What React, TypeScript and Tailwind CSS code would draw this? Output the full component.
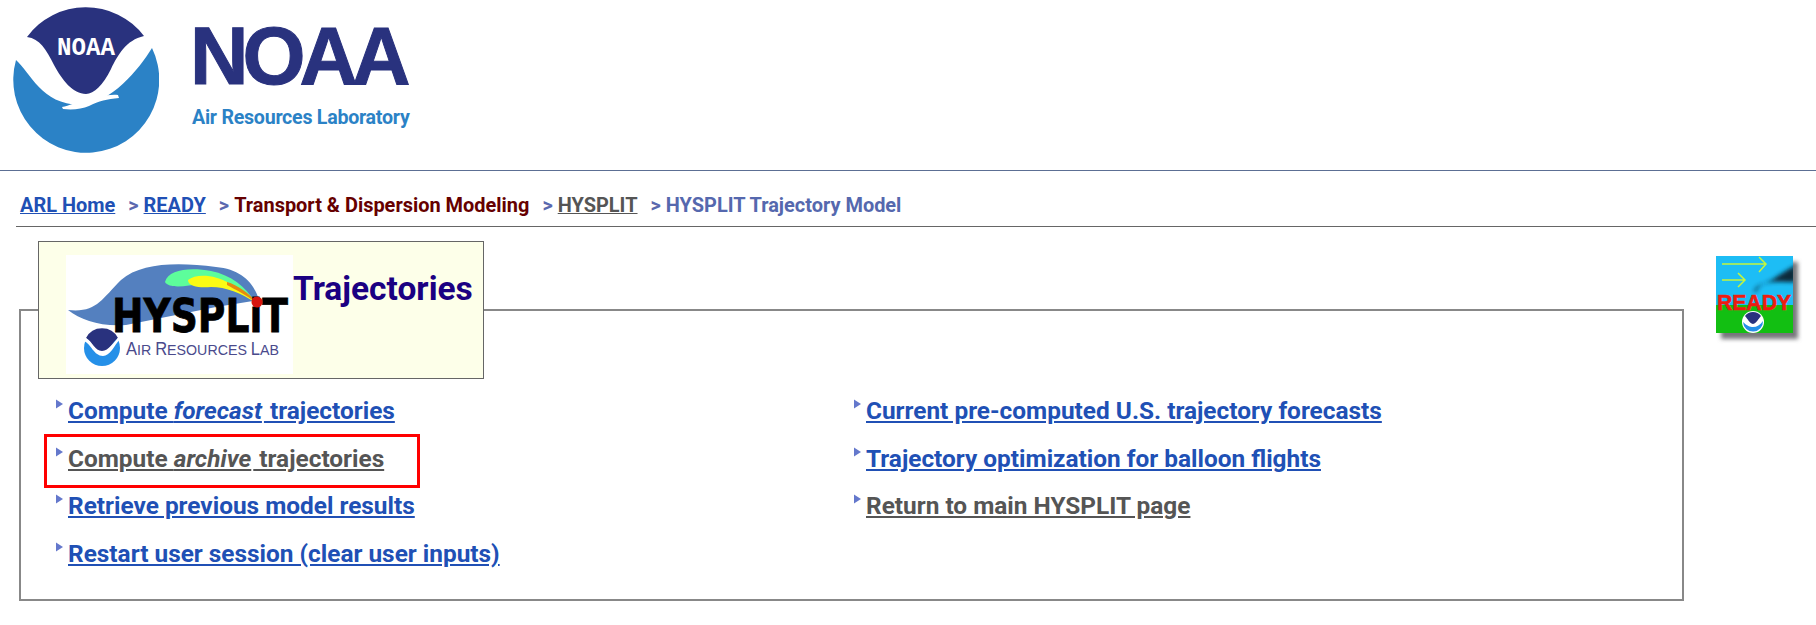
const NoaaMark = () => (
  <svg viewBox="0 0 146 146" className="w-[146px] h-[146px]">
    <path d="M3 53 C18 66 28 97 67 98 C98 97 126 62 139 41 A73 73 0 1 1 3 53 Z" fill="#2b82c6" />
    <path d="M14 30 A73 73 0 0 1 131 29 C113 33 105 48 98 62 C90 78 81 87 73 87 C60 87 49 73 41 58 C33 42 27 32 14 30 Z" fill="#29327e" />
    <path d="M64 90 C78 92 92 87 105 88 L106 91 C94 92 86 94 76 99 C69 102 60 103 50 102 L49 100 C56 99 64 95 68 93 Z" fill="#ffffff" />
    <text x="44" y="48" fill="#ffffff" fontFamily="'Liberation Mono', monospace" fontWeight="700" fontSize="26" textLength="58" lengthAdjust="spacingAndGlyphs">NOAA</text>
  </svg>
);

const HysplitLogo = () => (
  <svg viewBox="0 0 227 119" className="w-[227px] h-[119px] bg-white shrink-0 overflow-visible">
    <path d="M2 55 C30 58 35 45 55 25 C75 8 110 7 150 12 C175 14 188 28 193 45 L150 52 L60 70 C35 72 15 65 2 55 Z" fill="#5480bf" />
    <path d="M99 27 C102 14 125 12 145 16 C165 20 180 32 188 46 C170 32 150 27 135 29 C120 31 103 34 99 27 Z" fill="#5dfd9b" />
    <path d="M122 25 C130 18 150 20 163 28 C175 35 183 42 190 48 C175 38 160 32 145 32 C135 33 122 32 122 25 Z" fill="#fbfb14" />
    <path d="M161 27 C172 30 185 40 191 48 C180 40 170 35 161 30 Z" fill="#e68a10" />
    <text x="46" y="77" fill="#000000" stroke="#000000" strokeWidth="0.8" fontFamily="'DejaVu Sans', sans-serif" fontWeight="700" fontSize="47" textLength="176" lengthAdjust="spacingAndGlyphs">HYSPLiT</text>
    <circle cx="191" cy="47" r="5.5" fill="#d8140e" />
    <circle cx="36" cy="93" r="18" fill="#2590e8" />
    <path d="M20 83 A18 18 0 0 1 52 83 C46 87 43 97 36 99 C29 97 26 87 20 83 Z" fill="#29327e" />
    <path d="M18 86 C25 89 28 101 37 101 C44 101 48 91 54 84 L54 81 C47 87 43 96 36 96 C29 96 26 86 20 83 Z" fill="#ffffff" />
    <text x="60" y="100" fill="#4a4a8c" fontFamily="'Liberation Sans', sans-serif" fontWeight="400" fontSize="15.5" textLength="153" lengthAdjust="spacingAndGlyphs">
      <tspan fontSize="18">A</tspan>IR <tspan fontSize="18">R</tspan>ESOURCES <tspan fontSize="18">L</tspan>AB
    </text>
  </svg>
);

const ReadyIcon = () => (
  <svg viewBox="0 0 88 88" className="w-[88px] h-[88px] shrink-0 overflow-visible">
    <defs>
      <filter id="soft" x="-20%" y="-20%" width="140%" height="140%">
        <feGaussianBlur stdDeviation="2" />
      </filter>
      <filter id="soft2" x="-30%" y="-50%" width="160%" height="200%">
        <feGaussianBlur stdDeviation="2.2" />
      </filter>
      <clipPath id="tile">
        <rect width="77" height="77" />
      </clipPath>
    </defs>
    <rect x="5" y="6" width="77" height="77" fill="#77777c" filter="url(#soft)" />
    <rect x="0" y="0" width="77" height="49" fill="#1dbdf5" />
    <rect x="0" y="49" width="77" height="28" fill="#12bf12" />
    <path d="M6 8 H50 M43 1 L50 8 L43 16 M6 24 H29 M22 17 L29 24 L22 31" fill="none" stroke="#c4f53c" strokeWidth="1.5" />
    <g clipPath="url(#tile)">
      <path d="M38 36 C40 28 48 28 56 24 C62 20 70 14 80 9 V26 C68 26 58 25 50 27 C44 29 42 31 40 36" fill="#0d2a3a" filter="url(#soft2)" />
    </g>
    <text x="1" y="54" fill="#ee1c10" stroke="#ee1c10" strokeWidth="0.6" fontFamily="'Liberation Sans', sans-serif" fontWeight="700" fontSize="22" textLength="74" lengthAdjust="spacingAndGlyphs">READY</text>
    <circle cx="37" cy="66" r="11" fill="#ffffff" />
    <path d="M29 60 A10 10 0 0 1 45 60 C42 63 41 67 37 68 C33 67 32 63 29 60 Z" fill="#29327e" />
    <path d="M27 66 C31 70 34 71 37 71 C41 71 44 69 47 65 A10 10 0 0 1 27 66 Z" fill="#2590e8" />
  </svg>
);

const Bullet = () => (
  <svg viewBox="0 0 7 9" className="w-[7px] h-[10px] shrink-0 mt-[3px]">
    <path d="M0 0 L7 4.5 L0 9 Z" fill="#6478cc" />
  </svg>
);

const linkClass = "underline text-[#2050b5]";
const visitedClass = "underline text-[#555555]";

const TrajectoryLink = ({ visited, children }: { visited?: boolean; children: React.ReactNode }) => (
  <div className="flex gap-[5px] h-[47.5px] whitespace-pre">
    <Bullet />
    <a href="#" className={visited ? visitedClass : linkClass}>
      {children}
    </a>
  </div>
);

const Sep = () => <span className="text-[#5a68ae] ml-[13px] mr-[5px]">&gt;</span>;

export default function App() {
  return (
    <div className="min-h-[625px] bg-white font-['Roboto',sans-serif] font-bold">
      {/* Logo header */}
      <header className="h-[171px] border-b border-[#5c6f94] flex pl-[13px] pt-[7px]">
        <NoaaMark />
        <div className="ml-[33px] pt-[11px]">
          <div className="-ml-[2px] font-['Liberation_Sans',sans-serif] text-[81px] leading-[76px] tracking-[-6px] text-[#29327e] [-webkit-text-stroke:1px_#29327e]">
            NOAA
          </div>
          <div className="mt-[13px] text-[19.6px] leading-[22px] font-bold tracking-[-0.25px] text-[#2b82c6]">
            Air Resources Laboratory
          </div>
        </div>
      </header>

      {/* Breadcrumb */}
      <nav className="h-[55px] pl-[20px] pt-[23px] text-[19.95px] leading-[22px] whitespace-pre">
        <a href="#" className={linkClass}>ARL Home</a>
        <Sep />
        <a href="#" className={linkClass}>READY</a>
        <Sep />
        <span className="text-[#660000]">Transport &amp; Dispersion Modeling</span>
        <Sep />
        <a href="#" className={visitedClass}>HYSPLIT</a>
        <Sep />
        <span className="text-[#5568ae]">HYSPLIT Trajectory Model</span>
      </nav>
      <div className="ml-[16px] border-t border-[#666666]" />

      <div className="flex items-start pl-[19px] pt-[14px]">
        <fieldset className="w-[1665px] h-[360px] shrink-0 border-2 border-[#888888]">
          <legend className="ml-[17px] w-[446px] h-[138px] border border-[#666666] bg-[#fdffe9] pl-[27px] pt-[13px] flex items-start">
            <HysplitLogo />
            <span className="text-[#1b0082] text-[33.5px] leading-[38px] mt-[15px]">Trajectories</span>
          </legend>
          <div className="grid grid-cols-[798px_1fr] pl-[35px] pt-[17px] text-[24.4px] leading-[30px]">
            <div>
              <TrajectoryLink>
                Compute <i className="pr-[2px]">forecast</i> trajectories
              </TrajectoryLink>
              <div className="relative">
                <TrajectoryLink visited>
                  Compute <i className="pr-[2px]">archive</i> trajectories
                </TrajectoryLink>
                {/* Highlight around the selected link */}
                <div className="absolute left-[-12px] top-[-10px] w-[376px] h-[54px] border-[3px] border-[#ff0000]" />
              </div>
              <TrajectoryLink>Retrieve previous model results</TrajectoryLink>
              <TrajectoryLink>Restart user session (clear user inputs)</TrajectoryLink>
            </div>
            <div>
              <TrajectoryLink>Current pre-computed U.S. trajectory forecasts</TrajectoryLink>
              <TrajectoryLink>Trajectory optimization for balloon flights</TrajectoryLink>
              <TrajectoryLink visited>Return to main HYSPLIT page</TrajectoryLink>
            </div>
          </div>
        </fieldset>
        <div className="ml-[32px] mt-[15px]">
          <ReadyIcon />
        </div>
      </div>
    </div>
  );
}
